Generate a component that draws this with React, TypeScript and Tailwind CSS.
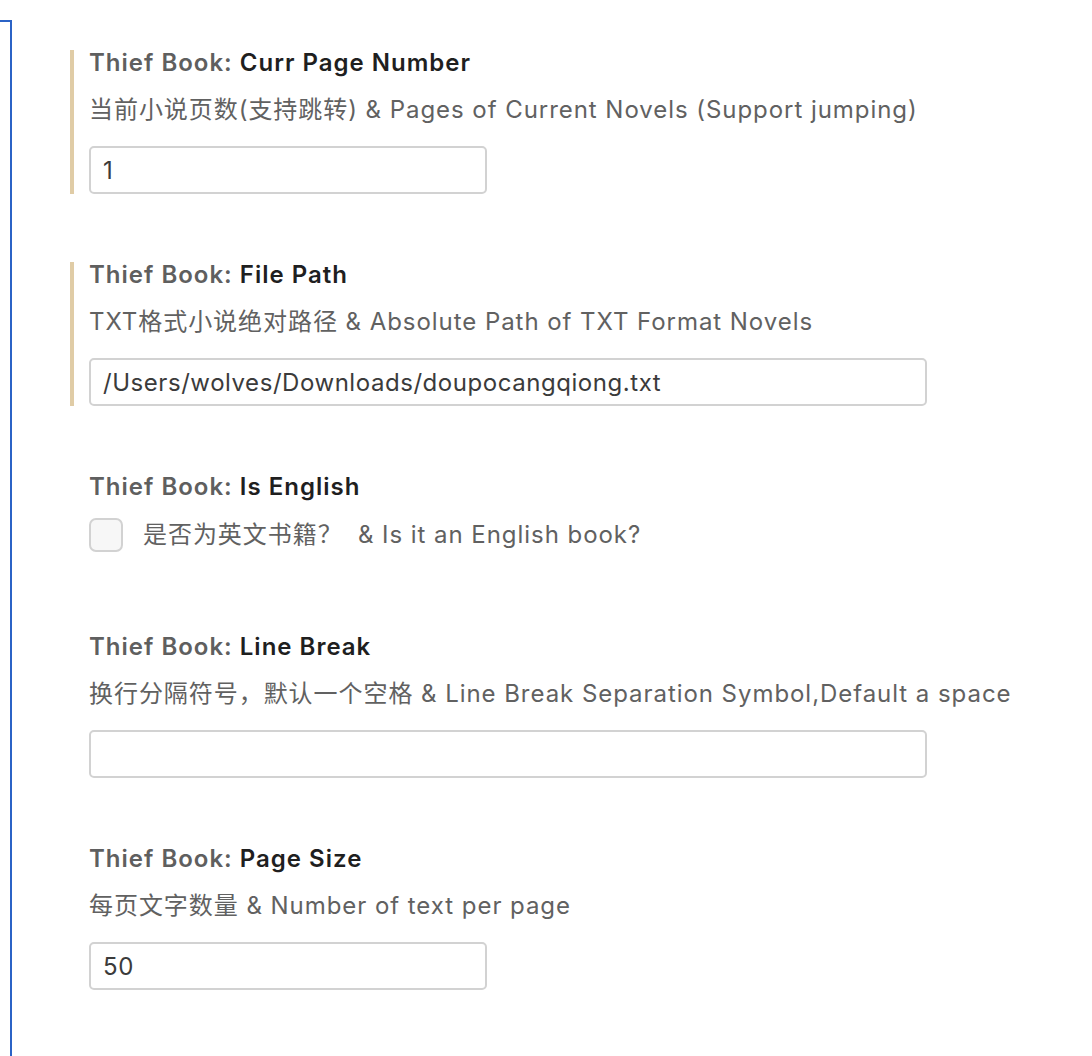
import { useState } from 'react'

const FONT = { fontFamily: 'Inter, "Noto Sans CJK SC", sans-serif' }

type Item = {
  key: string
  name: string
  desc: string
  kind: 'text' | 'check'
  value?: string
  wide?: boolean
  modified?: boolean
}

const ITEMS: Item[] = [
  { key: 'page', name: 'Curr Page Number', desc: '当前小说页数(支持跳转) & Pages of Current Novels (Support jumping)', kind: 'text', value: '1', modified: true },
  { key: 'path', name: 'File Path', desc: 'TXT格式小说绝对路径 & Absolute Path of TXT Format Novels', kind: 'text', value: '/Users/wolves/Downloads/doupocangqiong.txt', wide: true, modified: true },
  { key: 'en', name: 'Is English', desc: '是否为英文书籍？  & Is it an English book?', kind: 'check' },
  { key: 'br', name: 'Line Break', desc: '换行分隔符号，默认一个空格 & Line Break Separation Symbol,Default a space', kind: 'text', value: '', wide: true },
  { key: 'size', name: 'Page Size', desc: '每页文字数量 & Number of text per page', kind: 'text', value: '50' },
]

function Setting({ item }: { item: Item }) {
  const [value, setValue] = useState(item.value ?? '')
  const [checked, setChecked] = useState(false)

  return (
    <div
      className={`ml-[58px] border-l-4 pl-[15px] ${item.modified ? 'border-[#e0cca6]' : 'border-transparent'} ${item.kind === 'check' ? 'mb-[82px]' : 'mb-[68px]'}`}
    >
      <div className="text-[24px] leading-[26px] font-semibold tracking-[1px] text-[#5f5f5f]">
        Thief Book: <span className="text-[#1f1f1f]">{item.name}</span>
      </div>

      {item.kind === 'check' ? (
        <label className="mt-[18px] flex items-center gap-[20px] cursor-pointer">
          <input
            type="checkbox"
            checked={checked}
            onChange={e => setChecked(e.target.checked)}
            className="appearance-none w-[34px] h-[34px] rounded-[7px] border-2 border-[#d2d2d2] bg-[#f7f7f7] m-0"
          />
          <span className="text-[24px] leading-[32px] tracking-[0.95px] text-[#616161] whitespace-pre">{item.desc}</span>
        </label>
      ) : (
        <>
          <p className="mt-[18px] text-[24px] leading-[32px] tracking-[0.95px] text-[#616161] whitespace-nowrap">{item.desc}</p>
          <input
            value={value}
            onChange={e => setValue(e.target.value)}
            className={`mt-[20px] block h-[48px] ${item.wide ? 'w-[838px]' : 'w-[398px]'} rounded-[5px] border-2 border-[#d2d2d2] bg-white px-[12px] text-[24px] tracking-[0.55px] text-[#3b3b3b] outline-none`}
            style={FONT}
          />
        </>
      )}
    </div>
  )
}

export default function App() {
  return (
    <div className="flex min-h-[1056px] bg-white overflow-hidden" style={FONT}>
      <div className="w-[12px] mt-[20px] shrink-0 border-t-2 border-r-2 border-[#2b63c6]" />
      <div className="pt-[50px] flex flex-col">
        {ITEMS.map(item => (
          <Setting key={item.key} item={item} />
        ))}
      </div>
    </div>
  )
}
